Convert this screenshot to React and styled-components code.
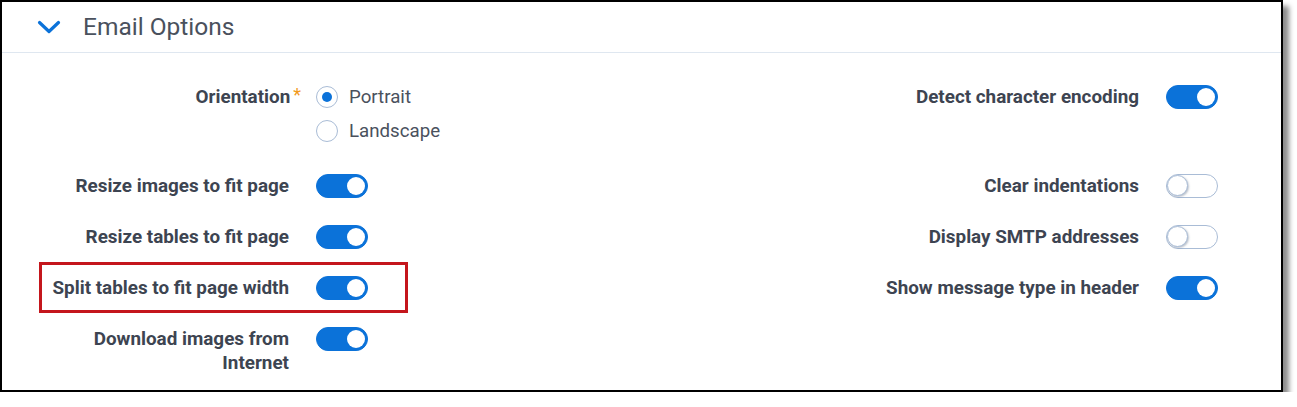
import React from "react";
import styled, { createGlobalStyle } from "styled-components";

const Global = createGlobalStyle`
  html, body { margin: 0; padding: 0; background: #ffffff; }
  body { font-family: Roboto, "Liberation Sans", sans-serif; }
  * { box-sizing: border-box; }
`;

const Frame = styled.div`
  width: 1283px;
  height: 392px;
  border: 2px solid #000;
  background: #fff;
  box-shadow: 6px 6px 5px rgba(0, 0, 0, 0.45);
  display: flex;
  flex-direction: column;
  overflow: hidden;
`;

const Header = styled.div`
  height: 51px;
  flex: none;
  display: flex;
  align-items: center;
  padding-left: 35px;
  gap: 22px;
  border-bottom: 1px solid #dfe7f0;
`;

const Title = styled.h2`
  margin: 0;
  font-size: 24.5px;
  font-weight: 400;
  color: #4a515d;
  line-height: 28px;
`;

const Body = styled.div`
  flex: 1;
  display: flex;
  justify-content: space-between;
  padding: 18px 63px 0 37px;
`;

const Column = styled.div`
  display: flex;
  flex-direction: column;
  align-items: flex-start;
`;

const Row = styled.div`
  display: flex;
  align-items: flex-start;
  gap: 27px;
  padding: 13.5px 0;
  min-height: ${(p) => (p.$tall ? "89px" : "51px")};
  outline: ${(p) => (p.$highlight ? "3px solid #c4161c" : "none")};
  outline-offset: -3px;
  padding-right: ${(p) => (p.$wide ? "40px" : "0")};
`;

const Label = styled.div`
  width: ${(p) => p.$w}px;
  flex: none;
  text-align: right;
  font-size: 18.85px;
  font-weight: 700;
  line-height: 24px;
  color: #3d4451;
`;

const Required = styled.span`
  color: #f29a1c;
  font-weight: 400;
  margin-right: -12px;
  margin-left: 3px;
  vertical-align: top;
  font-size: 18px;
  line-height: 20px;
`;

const RadioGroup = styled.div`
  display: flex;
  flex-direction: column;
  gap: 10px;
`;

const RadioOption = styled.label`
  display: flex;
  align-items: center;
  gap: 11px;
  font-size: 18.7px;
  line-height: 24px;
  color: #4a515d;
`;

const RadioCircle = styled.span`
  width: 22px;
  height: 22px;
  border-radius: 50%;
  border: 1px solid #a9bcd6;
  display: flex;
  align-items: center;
  justify-content: center;
  &::after {
    content: "";
    width: 10px;
    height: 10px;
    border-radius: 50%;
    background: ${(p) => (p.$checked ? "#0b72d9" : "transparent")};
  }
`;

const ToggleTrack = styled.span`
  width: 52px;
  height: 24px;
  flex: none;
  border-radius: 12px;
  position: relative;
  background: ${(p) => (p.$on ? "#0b72d9" : "#fff")};
  border: 1px solid ${(p) => (p.$on ? "#0b72d9" : "#a9bcd6")};
`;

const ToggleKnob = styled.span`
  position: absolute;
  top: ${(p) => (p.$on ? "2px" : "0px")};
  left: ${(p) => (p.$on ? "30px" : "0px")};
  width: ${(p) => (p.$on ? "18px" : "21px")};
  height: ${(p) => (p.$on ? "18px" : "21px")};
  border-radius: 50%;
  background: #fff;
  border: ${(p) => (p.$on ? "none" : "1px solid #a9bcd6")};
  box-shadow: ${(p) => (p.$on ? "none" : "1px 1px 2px rgba(60,80,110,0.35)")};
`;

const Toggle = ({ on }) => (
  <ToggleTrack $on={on}>
    <ToggleKnob $on={on} />
  </ToggleTrack>
);

const Chevron = () => (
  <svg width="24" height="14" viewBox="0 0 24 14" fill="none">
    <path d="M2.5 2.5 L12 11.5 L21.5 2.5" stroke="#0b72d9" strokeWidth="3.2" strokeLinecap="round" strokeLinejoin="round" />
  </svg>
);

export default function App() {
  return (
    <>
      <Global />
      <Frame>
        <Header>
          <Chevron />
          <Title>Email Options</Title>
        </Header>
        <Body>
          <Column>
            <Row $tall>
              <Label $w={250}>
                Orientation<Required>*</Required>
              </Label>
              <RadioGroup>
                <RadioOption>
                  <RadioCircle $checked />
                  Portrait
                </RadioOption>
                <RadioOption>
                  <RadioCircle />
                  Landscape
                </RadioOption>
              </RadioGroup>
            </Row>
            <Row $wide>
              <Label $w={250}>Resize images to fit page</Label>
              <Toggle on />
            </Row>
            <Row $wide>
              <Label $w={250}>Resize tables to fit page</Label>
              <Toggle on />
            </Row>
            <Row $wide $highlight>
              <Label $w={250}>Split tables to fit page width</Label>
              <Toggle on />
            </Row>
            <Row $wide>
              <Label $w={250}>Download images from Internet</Label>
              <Toggle on />
            </Row>
          </Column>
          <Column>
            <Row $tall>
              <Label $w={300}>Detect character encoding</Label>
              <Toggle on />
            </Row>
            <Row>
              <Label $w={300}>Clear indentations</Label>
              <Toggle />
            </Row>
            <Row>
              <Label $w={300}>Display SMTP addresses</Label>
              <Toggle />
            </Row>
            <Row>
              <Label $w={300}>Show message type in header</Label>
              <Toggle on />
            </Row>
          </Column>
        </Body>
      </Frame>
    </>
  );
}
